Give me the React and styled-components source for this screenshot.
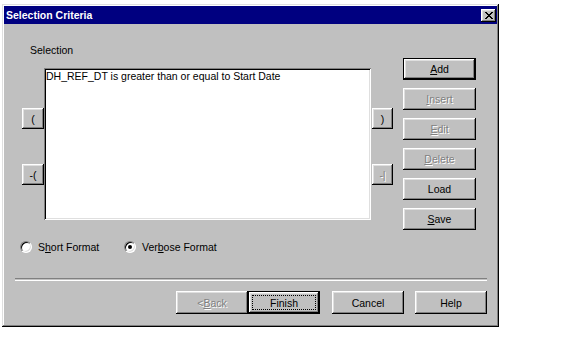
import React, { useState } from 'react';
import styled, { createGlobalStyle } from 'styled-components';

const GlobalStyle = createGlobalStyle`
    html, body {
        margin: 0;
        padding: 0;
        background: #ffffff;
    }
    body {
        font-family: "Liberation Sans", Arial, sans-serif;
        font-size: 10.5px;
    }
`;

const raised = `
    box-shadow: inset -1px -1px #000000, inset 1px 1px #ffffff,
        inset -2px -2px #808080, inset 2px 2px #dfdfdf;
`;

const Window = styled.div`
    box-sizing: border-box;
    margin: 4px 0 0 2px;
    width: 497px;
    height: 323px;
    padding: 2px;
    background: #c0c0c0;
    box-shadow: inset -1px -1px #000000, inset 1px 1px #dfdfdf,
        inset -2px -2px #808080, inset 2px 2px #ffffff;
    display: flex;
    flex-direction: column;
    color: #000000;
`;

const TitleBar = styled.div`
    height: 18px;
    background: #000080;
    display: flex;
    align-items: center;
    justify-content: space-between;
    padding-left: 2px;
    color: #ffffff;
    font-weight: bold;
    font-size: 10.5px;
`;

const CloseButton = styled.div`
    width: 15px;
    height: 13px;
    margin-right: 1px;
    background: #c0c0c0;
    ${raised}
    display: flex;
    align-items: center;
    justify-content: center;
`;

const Main = styled.div`
    box-sizing: border-box;
    height: 217px;
    padding: 20px 0 0 18px;
    display: flex;
    align-items: flex-start;
`;

const LeftSection = styled.div`
    display: flex;
    flex-direction: column;
`;

const Label = styled.div`
    height: 13px;
    line-height: 13px;
    margin: 0 0 11px 8px;
`;

const ListRow = styled.div`
    display: flex;
    align-items: flex-start;
`;

const SideCol = styled.div`
    display: flex;
    flex-direction: column;
    gap: 35px;
    padding-top: 40px;
    margin-left: ${(p) => (p.$right ? '1px' : '0')};
`;

const ListBox = styled.div`
    box-sizing: border-box;
    width: 327px;
    height: 152px;
    background: #ffffff;
    padding: 2px 2px;
    box-shadow: inset 1px 1px #808080, inset -1px -1px #ffffff,
        inset 2px 2px #000000, inset -2px -2px #dfdfdf;
`;

const ListItem = styled.div`
    height: 13px;
    line-height: 13px;
    white-space: nowrap;
`;

const RightCol = styled.div`
    display: flex;
    flex-direction: column;
    gap: 8px;
    margin-left: 10px;
    padding-top: 14px;
`;

const Button = styled.button`
    box-sizing: border-box;
    width: ${(p) => p.$w || 73}px;
    height: ${(p) => p.$h || 22}px;
    padding: 0;
    margin-left: ${(p) => p.$gap || 0}px;
    border: ${(p) => (p.$default ? '1px solid #000000' : 'none')};
    background: #c0c0c0;
    ${raised}
    font-family: "Liberation Sans", Arial, sans-serif;
    font-size: 10.5px;
    color: ${(p) => (p.disabled ? '#808080' : '#000000')};
    text-shadow: ${(p) => (p.disabled ? '1px 1px #ffffff' : 'none')};
    position: relative;
    display: flex;
    align-items: center;
    justify-content: center;
    cursor: default;

    &::after {
        content: '';
        display: ${(p) => (p.$focus ? 'block' : 'none')};
        position: absolute;
        inset: 3px;
        border: 1px dotted #000000;
    }

    u {
        text-decoration: underline;
    }
`;

const RadioRow = styled.div`
    height: 12px;
    padding-left: 16px;
    display: grid;
    grid-template-columns: 104px auto;
    align-items: center;
`;

const RadioItem = styled.label`
    display: flex;
    align-items: center;
    gap: 6px;
    height: 12px;
    line-height: 12px;
`;

const RadioCircle = styled.span`
    box-sizing: border-box;
    width: 12px;
    height: 12px;
    border-radius: 50%;
    border: 1px solid;
    border-color: #808080 #ffffff #ffffff #808080;
    background: #ffffff;
    box-shadow: inset 1px 1px #000000, inset -1px -1px #dfdfdf;
    display: flex;
    align-items: center;
    justify-content: center;

    &::after {
        content: '';
        width: 4px;
        height: 4px;
        border-radius: 50%;
        background: #000000;
        display: ${(p) => (p.$checked ? 'block' : 'none')};
    }
`;

const Separator = styled.div`
    height: 1px;
    margin: 25px 10px 0 11px;
    border-top: 1px solid #808080;
    border-bottom: 1px solid #ffffff;
`;

const ButtonRow = styled.div`
    display: flex;
    justify-content: flex-end;
    padding-right: 10px;
    margin-top: 10px;
`;

const CloseIcon = () => (
    <svg width="8" height="7" viewBox="0 0 8 7">
        <path d="M0 0h2v1h1v1h2V1h1V0h2v1H7v1H6v1H5v1h1v1h1v1h1v1H6V6H5V5H3v1H2v1H0V6h1V5h1V4h1V3H2V2H1V1H0z" fill="#000000" />
    </svg>
);

const App = () => {
    const [format, setFormat] = useState('verbose');

    return (
        <>
            <GlobalStyle />
            <Window>
                <TitleBar>
                    <span>Selection Criteria</span>
                    <CloseButton>
                        <CloseIcon />
                    </CloseButton>
                </TitleBar>

                <Main>
                    <LeftSection>
                        <Label>Selection</Label>
                        <ListRow>
                            <SideCol>
                                <Button $w={22} $h={21}>(</Button>
                                <Button $w={22} $h={21}>-(</Button>
                            </SideCol>
                            <ListBox>
                                <ListItem>DH_REF_DT is greater than or equal to Start Date</ListItem>
                            </ListBox>
                            <SideCol $right>
                                <Button $w={21} $h={21}>)</Button>
                                <Button $w={21} $h={21} disabled>-|</Button>
                            </SideCol>
                        </ListRow>
                    </LeftSection>

                    <RightCol>
                        <Button $default><u>A</u>dd</Button>
                        <Button disabled><u>I</u>nsert</Button>
                        <Button disabled><u>E</u>dit</Button>
                        <Button disabled><u>D</u>elete</Button>
                        <Button>Load</Button>
                        <Button><u>S</u>ave</Button>
                    </RightCol>
                </Main>

                <RadioRow>
                    <RadioItem onClick={() => setFormat('short')}>
                        <RadioCircle $checked={format === 'short'} />
                        <span>S<u>h</u>ort Format</span>
                    </RadioItem>
                    <RadioItem onClick={() => setFormat('verbose')}>
                        <RadioCircle $checked={format === 'verbose'} />
                        <span>Ver<u>b</u>ose Format</span>
                    </RadioItem>
                </RadioRow>

                <Separator />

                <ButtonRow>
                    <Button $w={72} $h={23} disabled>&lt; <u>B</u>ack</Button>
                    <Button $w={72} $h={23} $default $focus>Finish</Button>
                    <Button $w={72} $h={23} $gap={12}>Cancel</Button>
                    <Button $w={72} $h={23} $gap={11}>Help</Button>
                </ButtonRow>
            </Window>
        </>
    );
};

export default App;
